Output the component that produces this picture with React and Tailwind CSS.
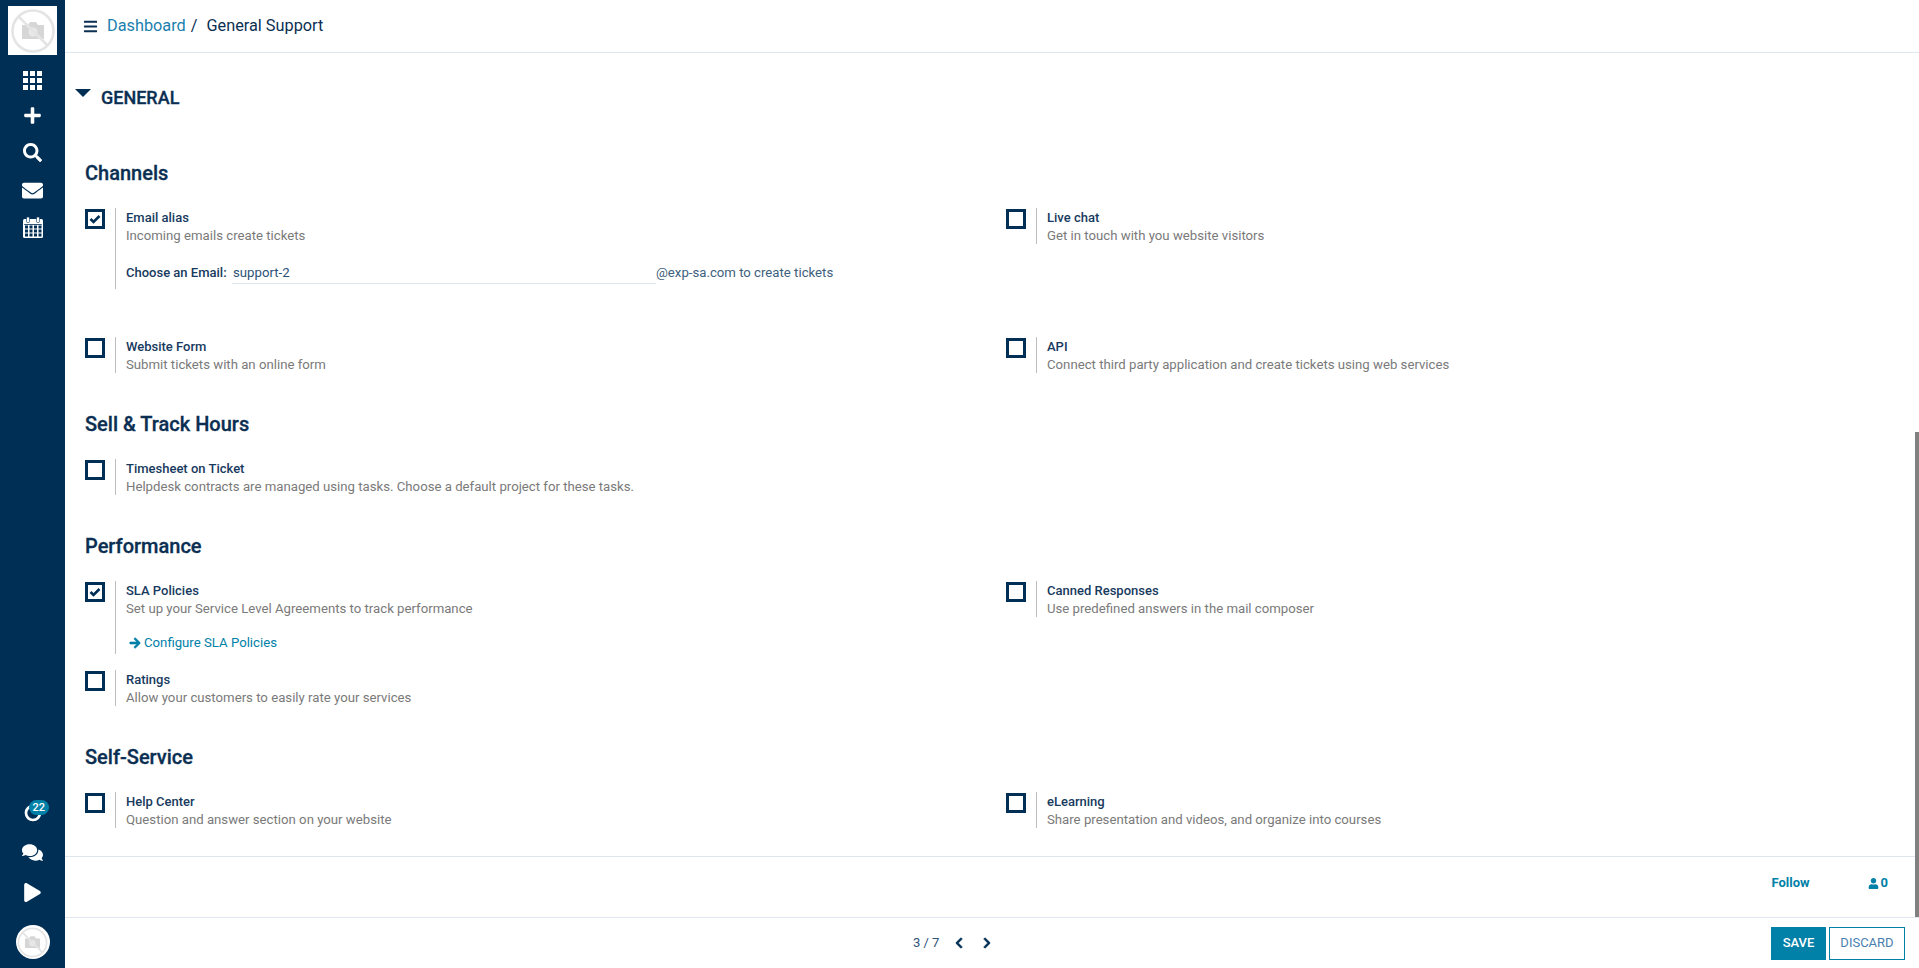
import React from "react";
import {
  FaPlus,
  FaSearch,
  FaEnvelope,
  FaComments,
  FaPlay,
  FaBars,
  FaArrowRight,
  FaUser,
  FaChevronLeft,
  FaChevronRight,
} from "react-icons/fa";

function NoPhoto({ className }) {
  return (
    <svg viewBox="0 0 48 48" className={className}>
      <circle cx="24" cy="24" r="20.5" fill="none" stroke="#e4e4e4" strokeWidth="2.5" />
      <path d="M13 18h6l2-3h6l2 3h6v14H13z" fill="#d6d6d6" />
      <circle cx="24" cy="25" r="4.5" fill="#e8e8e8" />
      <path d="M10 10l28 28" stroke="#e4e4e4" strokeWidth="2.5" />
    </svg>
  );
}

function AppsIcon() {
  const spots = [0, 7, 14];
  return (
    <svg viewBox="0 0 19 19" className="w-[19px] h-[19px]" fill="#fff">
      {spots.map((y) => spots.map((x) => <rect key={`${x}-${y}`} x={x} y={y} width="5" height="5" />))}
    </svg>
  );
}

function CalendarIcon() {
  const cols = [2, 6.5, 11, 15.5];
  const rows = [8.5, 12.5, 16.5];
  return (
    <svg viewBox="0 0 20 21" className="w-[20px] h-[21px]">
      <rect y="2" width="20" height="19" rx="1.5" fill="#fff" />
      <rect x="1.2" y="7.2" width="17.6" height="0.8" fill="#002f56" />
      {rows.map((y) => cols.map((x) => <rect key={`${x}-${y}`} x={x} y={y} width="3" height="3" fill="#002f56" />))}
      <rect x="3.5" y="0" width="3" height="5.5" rx="1" fill="#fff" stroke="#002f56" strokeWidth="0.6" />
      <rect x="13.5" y="0" width="3" height="5.5" rx="1" fill="#fff" stroke="#002f56" strokeWidth="0.6" />
    </svg>
  );
}

function Option({ title, desc, checked, children }) {
  return (
    <div className="flex items-start">
      <div className="mt-px w-5 h-5 border-[3px] border-[#002f56] flex items-center justify-center shrink-0">
        {checked && (
          <svg viewBox="0 0 12 10" className="w-3 h-[10px]">
            <path d="M1.5 5l3 3L10.5 2" fill="none" stroke="#002f56" strokeWidth="2.6" />
          </svg>
        )}
      </div>
      <div className="ml-[10px] pl-[10px] pt-px border-l border-[#bdbdbd] text-[13.2px]">
        <div className="text-[13px] leading-[18px] font-medium text-[#173a5e]">{title}</div>
        <div className="leading-[17px] text-[#7a7a7a]">{desc}</div>
        {children}
      </div>
    </div>
  );
}

function Heading({ children, className }) {
  return <h2 className={`text-[20px] leading-7 font-medium [-webkit-text-stroke:0.3px] text-[#0b2f52] ${className}`}>{children}</h2>;
}

export default function App() {
  return (
    <div className="flex h-[968px] overflow-hidden bg-white font-['Roboto',sans-serif]">
      {/* Sidebar */}
      <aside className="w-[65px] shrink-0 bg-[#002f56] flex flex-col items-center text-white">
        <div className="mt-[6px] w-[49px] h-[49px] bg-white flex items-center justify-center">
          <NoPhoto className="w-[48px] h-[48px]" />
        </div>
        <div className="mt-[7px] flex flex-col items-center">
          <div className="h-[36px] flex items-center"><AppsIcon /></div>
          <div className="h-[34px] flex items-center"><FaPlus className="text-[19px]" /></div>
          <div className="h-[40px] flex items-center"><FaSearch className="text-[19px]" /></div>
          <div className="h-[36px] flex items-center"><FaEnvelope className="text-[21px]" /></div>
          <div className="h-[38px] flex items-center"><CalendarIcon /></div>
        </div>
        <div className="mt-auto flex flex-col items-center">
          <div className="relative h-[40px] flex items-center">
            <svg viewBox="0 0 20 20" className="w-[18px] h-[18px] mt-[2px]">
              <circle cx="10" cy="10" r="7.8" fill="none" stroke="#fff" strokeWidth="3" />
            </svg>
            <span className="absolute left-[5px] top-[8px] h-[15px] px-[4px] rounded-full bg-[#0180a8] text-[11px] leading-[15px] font-medium">22</span>
          </div>
          <div className="h-[40px] flex items-center"><FaComments className="text-[21px]" /></div>
          <div className="h-[40px] flex items-center"><FaPlay className="text-[19px]" /></div>
          <div className="mt-[13px] mb-[9px] w-[34px] h-[34px] rounded-full bg-white flex items-center justify-center">
            <NoPhoto className="w-[33px] h-[33px]" />
          </div>
        </div>
      </aside>

      <div className="flex-1 min-w-0 flex flex-col">
        {/* Breadcrumb */}
        <header className="h-[53px] shrink-0 border-b border-[#dee6f0] pl-[18px] flex items-center text-[16.3px] text-[#0b2f52]">
          <FaBars className="text-[15px] mr-[9px]" />
          <span className="text-[#1a7fae]">Dashboard</span>
          <span className="ml-[5px] mr-[9px]">/</span>
          <span>General Support</span>
        </header>

        <div className="flex-1 min-h-0 flex">
          <main className="flex-1 min-w-0 pl-5">
            <div className="mt-8 -ml-[10px] h-6 flex items-center">
              <svg viewBox="0 0 16 8" className="w-4 h-2 mr-[10px] -mt-[9px]">
                <path d="M0 0h16L8 8z" fill="#002f56" />
              </svg>
              <span className="text-[18px] font-medium [-webkit-text-stroke:0.3px] text-[#0b2f52]">GENERAL</span>
            </div>

            <Heading className="mt-[50px]">Channels</Heading>
            <div className="mt-[21px] grid grid-cols-[921px_1fr]">
              <Option title="Email alias" desc="Incoming emails create tickets" checked>
                <div className="mt-5 pb-[5px] flex items-start leading-[18px] text-[#173a5e]">
                  <span className="text-[13px] font-medium w-[106px]">Choose an Email:</span>
                  <span className="w-[424px] h-5 border-b border-[#dee6f0] text-[#2b5278] pl-px">support-2</span>
                  <span className="text-[#3e5f7d]">@exp-sa.com to create tickets</span>
                </div>
              </Option>
              <Option title="Live chat" desc="Get in touch with you website visitors" />
            </div>
            <div className="mt-12 grid grid-cols-[921px_1fr]">
              <Option title="Website Form" desc="Submit tickets with an online form" />
              <Option title="API" desc="Connect third party application and create tickets using web services" />
            </div>

            <Heading className="mt-[37px]">Sell &amp; Track Hours</Heading>
            <div className="mt-[21px]">
              <Option title="Timesheet on Ticket" desc="Helpdesk contracts are managed using tasks. Choose a default project for these tasks." />
            </div>

            <Heading className="mt-[37px]">Performance</Heading>
            <div className="mt-[21px] grid grid-cols-[921px_1fr]">
              <Option title="SLA Policies" desc="Set up your Service Level Agreements to track performance" checked>
                <div className="mt-[17px] pb-[2px] pl-[3px] flex items-center leading-[18px] text-[#0180a8]">
                  <FaArrowRight className="text-[12px] mr-[3px] [stroke-width:30]" />
                  <span>Configure SLA Policies</span>
                </div>
              </Option>
              <Option title="Canned Responses" desc="Use predefined answers in the mail composer" />
            </div>
            <div className="mt-4">
              <Option title="Ratings" desc="Allow your customers to easily rate your services" />
            </div>

            <Heading className="mt-[37px]">Self-Service</Heading>
            <div className="mt-[21px] grid grid-cols-[921px_1fr]">
              <Option title="Help Center" desc="Question and answer section on your website" />
              <Option title="eLearning" desc="Share presentation and videos, and organize into courses" />
            </div>

            {/* Followers */}
            <div className="mt-7 -ml-5 h-[61px] pb-[8px] border-t border-[#dee6f0] flex items-center justify-end text-[13px] font-bold text-[#0180a8]">
              <span>Follow</span>
              <FaUser className="ml-[58px] text-[11px]" />
              <span className="ml-[2px] mr-[27px]">0</span>
            </div>
          </main>
          {/* Scrollbar */}
          <div className="w-1 shrink-0 pt-[379px]">
            <div className="h-full bg-[#808080]" />
          </div>
        </div>

        {/* Pager and actions */}
        <footer className="h-[51px] shrink-0 border-t border-[#dee6f0] relative flex items-center justify-end pr-[14px]">
          <div className="absolute left-[848px] top-0 h-full flex items-center text-[13px] text-[#2b5278]">
            <span>3 / 7</span>
            <FaChevronLeft className="ml-[14px] text-[12px] text-[#002f56] [stroke-width:30]" />
            <FaChevronRight className="ml-[16px] text-[12px] text-[#002f56] [stroke-width:30]" />
          </div>
          <button className="w-[55px] h-[33px] bg-[#0180a8] text-white text-[13px] font-medium">SAVE</button>
          <button className="ml-[3px] w-[76px] h-[33px] border border-[#0180a8] text-[#4a7fb0] text-[13px]">DISCARD</button>
        </footer>
      </div>
    </div>
  );
}
